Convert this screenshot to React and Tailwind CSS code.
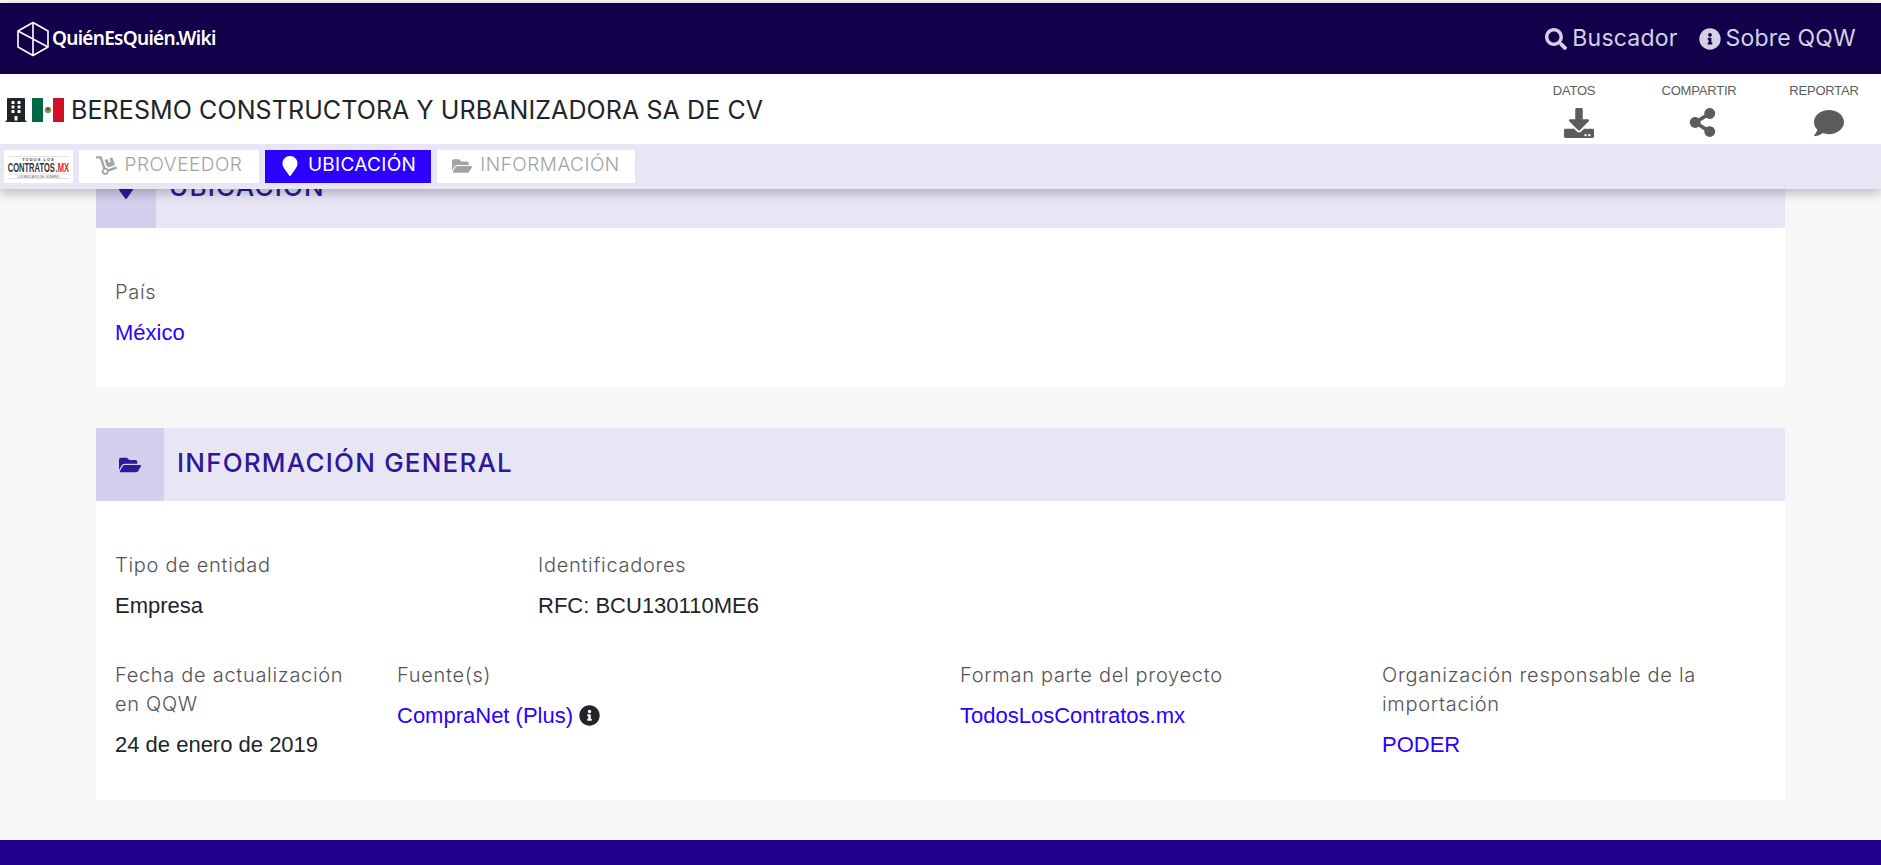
import React from "react";
import { FaSearch, FaInfoCircle, FaBuilding, FaMapMarker, FaFolderOpen, FaDolly, FaDownload, FaShareAlt, FaComment } from "react-icons/fa";

const HEAD = "font-['Inter','Noto_Sans',sans-serif]";
const BODY = "font-['Liberation_Sans',Arial,sans-serif]";

function Logo() {
  return (
    <svg width="34" height="36" viewBox="0 0 34 36" fill="none" stroke="#fff" strokeWidth="1.6" strokeLinejoin="round" className="shrink-0">
      <path d="M17 1.5 32 10v16L17 34.5 2 26V10Z" />
      <path d="M2 10 32 26M17 1.5V18M17 18v16.500" />
    </svg>
  );
}

function Flag() {
  return (
    <svg width="32" height="24" viewBox="0 0 32 24" className="shrink-0">
      <rect width="11" height="24" fill="#006847" />
      <rect x="11" width="10" height="24" fill="#fff" />
      <rect x="21" width="11" height="24" fill="#ce1126" />
      <circle cx="16" cy="12" r="3.200" fill="#8c9157" />
      <circle cx="16" cy="11" r="1.600" fill="#7a4a22" />
    </svg>
  );
}

function ContratosLogo() {
  return (
    <svg width="69" height="33" viewBox="0 0 69 33" className="shrink-0 bg-white">
      <line x1="4" x2="65" y1="6.500" y2="6.500" stroke="#c4c4c4" strokeWidth="0.500" />
      <text x="34.500" y="11" textAnchor="middle" fontSize="4" fontWeight="700" letterSpacing="1" fill="#444" fontFamily="Liberation Sans">TODOS LOS</text>
      <g transform="scale(0.6 1)">
        <text x="6.200" y="22" fontSize="12.600" fontWeight="700" fill="#333" fontFamily="Liberation Sans">CONTRATOS</text>
        <text x="86" y="22" fontSize="12.600" fontWeight="700" fill="#d8262c" fontFamily="Liberation Sans">.MX</text>
      </g>
      <line x1="4" x2="65" y1="24" y2="24" stroke="#c4c4c4" strokeWidth="0.500" />
      <text x="34.500" y="27.500" textAnchor="middle" fontSize="2.600" fill="#555" fontFamily="Liberation Sans">LOS MEXICANOS DEL GOBIERNO</text>
      <line x1="4" x2="65" y1="28.500" y2="28.500" stroke="#c4c4c4" strokeWidth="0.500" />
    </svg>
  );
}

function Tab({ icon, label, active, width }) {
  return (
    <div className={`flex h-[33px] items-center justify-center gap-[8px] pb-[2px] text-[19px] ${active ? "bg-[#2c00ff] tracking-[0.3px] text-white" : "bg-white font-light tracking-[0.5px] text-[#a3a3a3]"} ${width}`}>
      {icon}
      <span>{label}</span>
    </div>
  );
}

function Action({ label, icon, offset }) {
  return (
    <div className="flex w-[114px] flex-col items-center">
      <span className={`${BODY} text-[13px] leading-[14px] tracking-[-0.2px] text-[#5c5c5c]`}>{label}</span>
      <span className={`mt-[10px] text-[#5c5c5c] ${offset}`}>{icon}</span>
    </div>
  );
}

function Field({ label, value, link, extra }) {
  return (
    <div>
      <div className={`${HEAD} text-[20px] font-light leading-[29px] tracking-[0.7px] text-[#555]`}>{label}</div>
      <div className={`${BODY} mt-[11px] flex items-center gap-[6px] text-[22px] leading-[29px] ${link ? "text-[#2c00ff]" : "text-[#212529]"}`}>
        <span>{value}</span>
        {extra}
      </div>
    </div>
  );
}

function SectionHeader({ icon, title, tile, height }) {
  return (
    <div className={`flex items-stretch bg-[#e8e6f5] ${height}`}>
      <div className={`flex items-center justify-center bg-[#d3cfec] text-[#2d1a9b] ${tile}`}>{icon}</div>
      <h2 className={`${HEAD} ml-[13px] self-center pb-[4px] text-[26px] font-medium tracking-[1.200px] text-[#2d1a9b]`}>{title}</h2>
    </div>
  );
}

export default function App() {
  return (
    <div className={`${HEAD} flex h-[865px] flex-col overflow-hidden bg-[#f7f7f7] pt-[3px]`}>
      <header className="relative z-10 shadow-[0_4px_10px_rgba(0,0,0,0.25)]">
        <nav className="flex h-[71px] items-center justify-between bg-[#13004a] pl-[16px] pr-[25px]">
          <div className="flex items-center gap-[2px]">
            <Logo />
            <span className="font-['Noto_Sans',sans-serif] text-[19px] font-semibold tracking-[-0.7px] text-white">QuiénEsQuién.Wiki</span>
          </div>
          <div className="flex items-center text-[23px] tracking-[0.2px] text-[#d4d0e6]">
            <FaSearch size={22} />
            <span className="ml-[5px]">Buscador</span>
            <FaInfoCircle size={22} className="ml-[21px]" />
            <span className="ml-[5px]">Sobre QQW</span>
          </div>
        </nav>
        <div className="flex h-[70px] items-center justify-between bg-white pl-[3.500px]">
          <div className="flex items-center pt-[2px]">
            <FaBuilding size={24} className="text-[#212529]" />
            <span className="ml-[4.500px]"><Flag /></span>
            <h1 className="ml-[7px] pt-[1px] text-[25px] font-normal tracking-[0.1px] text-[#212529]">BERESMO CONSTRUCTORA Y URBANIZADORA SA DE CV</h1>
          </div>
          <div className="flex items-start gap-[11px] self-start pt-[10px]">
            <Action label="DATOS" offset="pl-[10px]" icon={<FaDownload size={30} />} />
            <Action label="COMPARTIR" offset="pl-[6px]" icon={<FaShareAlt size={29} />} />
            <Action label="REPORTAR" offset="pl-[9px]" icon={<FaComment size={30} />} />
          </div>
        </div>
        <div className="flex h-[45px] items-start gap-[6px] bg-[#e8e6f5] pl-[4px] pt-[6px]">
          <ContratosLogo />
          <Tab width="w-[180px]" label="PROVEEDOR" icon={<FaDolly size={21} />} />
          <Tab width="w-[166px]" label="UBICACIÓN" active icon={<FaMapMarker size={20} />} />
          <Tab width="w-[198px]" label="INFORMACIÓN" icon={<FaFolderOpen size={20} />} />
        </div>
      </header>

      <main className="mx-[96px] mt-[-41px] flex flex-1 flex-col">
        <section className="bg-white">
          <SectionHeader height="h-[80px]" tile="w-[60px]" title="UBICACIÓN" icon={<FaMapMarker size={22} />} />
          <div className="h-[159px] px-[19px] pt-[50px]">
            <Field label="País" value="México" link />
          </div>
        </section>
        <section className="mt-[41px] bg-white">
          <SectionHeader height="h-[73px]" tile="w-[68px]" title="INFORMACIÓN GENERAL" icon={<FaFolderOpen size={22} />} />
          <div className="px-[19px] pt-[50px] pb-[41px]">
            <div className="grid grid-cols-[423px_1fr]">
              <Field label="Tipo de entidad" value="Empresa" />
              <Field label="Identificadores" value="RFC: BCU130110ME6" />
            </div>
            <div className="mt-[41px] grid grid-cols-[282px_563px_422px_1fr]">
              <Field label={<>Fecha de actualización<br />en QQW</>} value="24 de enero de 2019" />
              <Field label="Fuente(s)" value="CompraNet (Plus)" link extra={<FaInfoCircle size={21} className="text-[#212529]" />} />
              <Field label="Forman parte del proyecto" value="TodosLosContratos.mx" link />
              <Field label={<>Organización responsable de la<br />importación</>} value="PODER" link />
            </div>
          </div>
        </section>
      </main>

      <footer className="h-[25px] shrink-0 bg-[#20008a]" />
    </div>
  );
}
